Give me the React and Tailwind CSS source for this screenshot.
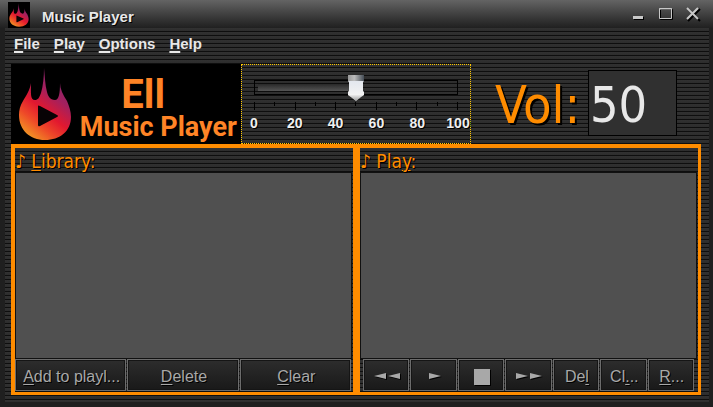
import React, { useState } from "react";

const stripes =
  "bg-[#303030] bg-[repeating-linear-gradient(180deg,#313131_0px,#2d2d2d_3px,#0e0e0e_3px,#0e0e0e_4px)]";
const tahoma = "font-['DejaVu_Sans_Condensed','Noto_Sans',sans-serif]";
const glow = "[text-shadow:1px_1px_0_#000]";

function Flame({ className, id }) {
  return (
    <svg viewBox="0 0 54 74" className={className} preserveAspectRatio="none" aria-hidden="true">
      <defs>
        <linearGradient id={id} x1="0.75" y1="0.05" x2="0.2" y2="1">
          <stop offset="0" stopColor="#80266f" />
          <stop offset="0.3" stopColor="#a3205e" />
          <stop offset="0.55" stopColor="#e2182f" />
          <stop offset="0.75" stopColor="#ee4a28" />
          <stop offset="1" stopColor="#f2a024" />
        </linearGradient>
      </defs>
      <path
        fill={`url(#${id})`}
        d="M26 1C26 10 25 19 23 26C21 31 20 33 17 33C12 33 13 26 13 16C12 23 8 29 5 34C2 39 1 43 1 48C1 63 12 73 27 73C42 73 53 64 53 50C53 44 51 39 49 34C45 28 42 22 42 16C42 26 41 33 37 33C32 33 30 29 29 25C27 18 27 10 26 1Z"
      />
      <path fill="#080305" d="M20 39Q20 38 22 39L39 48Q41 49 39 50L22 59Q20 60 20 58Z" />
    </svg>
  );
}

function Key({ children }) {
  return <span className="underline decoration-1 underline-offset-2">{children}</span>;
}

function Triangles({ count, back }) {
  const arrow = back ? "M12 0V6L0 3Z" : "M0 0V6L12 3Z";
  return (
    <svg
      width={count === 2 ? 26 : 12}
      height="8"
      className="mx-auto overflow-visible drop-shadow-[1px_1px_0_#000]"
      aria-hidden="true"
    >
      <path d={arrow} fill="#a8a8a8" />
      {count === 2 && <path d={arrow} transform="translate(14 0)" fill="#a8a8a8" />}
    </svg>
  );
}

function PushButton({ label, children }) {
  return (
    <button
      type="button"
      aria-label={label}
      className={`h-8 min-w-0 flex-1 whitespace-nowrap border border-[#6c6c6c] bg-linear-to-b from-[#2d2d2d] to-[#191919] pl-0.5 pt-1 text-center text-base leading-5 text-[#a8a8a8] outline-1 -outline-offset-2 outline-[#151515] ${glow}`}
    >
      {children}
    </button>
  );
}

function Volume({ value, onChange }) {
  return (
    <div className="h-20 w-[230px] shrink-0 border border-dotted border-[#ffc800] pt-[10px]">
      <div className="relative mx-[5px] h-[27px] pt-[5px]">
        <div className="mx-[7px] h-[15px] border border-black p-[3px]">
          <div
            className="h-full bg-linear-to-b from-[#292929] to-[#555]"
            style={{ width: `${value}%` }}
          />
        </div>
        <input
          type="range"
          min="0"
          max="100"
          value={value}
          onChange={(e) => onChange(e.target.value)}
          aria-label="Volume"
          className="absolute inset-0 h-[26px] w-full appearance-none bg-transparent [&::-webkit-slider-thumb]:h-[26px] [&::-webkit-slider-thumb]:w-4 [&::-webkit-slider-thumb]:appearance-none [&::-webkit-slider-thumb]:bg-[linear-gradient(180deg,transparent_6px,#e3e7ee_6px,#f2f2f2_75%,#999_100%),linear-gradient(90deg,#999,#bbb_40%,#444c55)] [&::-webkit-slider-thumb]:[clip-path:polygon(0_0,100%_0,100%_6px,15px_7px,15px_16px,100%_17px,100%_20px,13px_22px,8px_26px,3px_22px,0_20px,0_17px,1px_16px,1px_7px,0_6px)]"
        />
      </div>
      <div className="mx-3 flex h-2 justify-between">
        {[0, 10, 20, 30, 40, 50, 60, 70, 80, 90, 100].map((t) => (
          <span key={t} className={t % 20 ? "h-1 w-px bg-black" : "h-2 w-px bg-black"} />
        ))}
      </div>
      <div className={`mx-3 mt-[3px] flex justify-between text-sm font-bold leading-5 text-[#f0f0f0] ${glow}`}>
        {[0, 20, 40, 60, 80, 100].map((t) => (
          <span key={t} className="flex w-0 justify-center">
            {t}
          </span>
        ))}
      </div>
    </div>
  );
}

function Panel({ title, className, footer, children }) {
  return (
    <section className={`min-w-0 flex-1 border-t-4 border-b-3 border-[#ff8c00] pb-px ${className}`}>
      <h2 className={`h-6 whitespace-nowrap text-[19px] leading-[26px] text-[#ff8c00] ${tahoma} ${glow}`}>
        {title}
      </h2>
      <div className="mr-px h-[187px] border border-[#111] bg-[#505050]" />
      <div className={`flex gap-px ${footer}`}>{children}</div>
    </section>
  );
}

export default function App() {
  const [volume, setVolume] = useState(50);
  return (
    <div className="min-h-screen bg-[#1f1f1f] pb-[5px] font-['Liberation_Sans',Arial,sans-serif]">
      <header className="flex h-7 items-start bg-linear-to-b from-[#646464] to-[#202020] pl-2 pr-3">
        <span className="mt-0.5 flex h-[26px] w-[22px] items-center justify-center bg-black">
          <Flame id="small" className="h-6 w-5" />
        </span>
        <h1 className={`ml-3 mt-[7px] text-[15px] font-bold leading-5 text-[#e8e8e8] ${glow}`}>
          Music Player
        </h1>
        <div className="ml-auto mt-[7px] flex gap-3">
          <button type="button" aria-label="Minimize" className="h-4 w-4">
            <svg width="16" height="16">
              <path d="M5 10H15V13H5Z" fill="#000" />
              <path d="M4 9H14V12H4Z" fill="#c8c8c8" />
            </svg>
          </button>
          <button type="button" aria-label="Maximize" className="h-4 w-4">
            <svg width="16" height="16" fill="none">
              <path d="M3.5 2.5H15.5V12.5H3.5Z" stroke="#000" />
              <path d="M2.5 1.5H14.5V11.5H2.5ZM2 2H15" stroke="#c8c8c8" />
            </svg>
          </button>
          <button type="button" aria-label="Close" className="h-4 w-4">
            <svg width="16" height="16" fill="none" strokeWidth="2">
              <path d="M3 2L15 14M15 2L3 14" stroke="#000" />
              <path d="M2 1L13 12M13 1L2 12" stroke="#c8c8c8" />
            </svg>
          </button>
        </div>
      </header>

      <div className={`ml-[5px] mr-1 pb-[7px] pl-1.5 pr-2 ${stripes}`}>
        <nav className={`flex h-9 gap-3.5 pl-[3px] pt-1.5 text-[15px] font-bold leading-5 text-[#e8e8e8] ${glow}`}>
          {["File", "Play", "Options", "Help"].map((name) => (
            <button key={name} type="button" className="h-5">
              <span className="underline decoration-2 underline-offset-2">{name[0]}</span>
              {name.slice(1)}
            </button>
          ))}
        </nav>

        <div className="flex h-20">
          <div className="flex h-20 w-[230px] shrink-0 bg-black pl-[7px] pr-1 pt-[3px]">
            <Flame id="large" className="h-[74px] w-[54px]" />
            <div className="flex-1 pt-2 text-right font-['Roboto',sans-serif] font-bold text-[#ff8426]">
              <div className="pr-[72px] text-[40px] leading-10">Ell</div>
              <div className="whitespace-nowrap text-[27px] leading-6">Music Player</div>
            </div>
          </div>
          <Volume value={volume} onChange={setVolume} />
          <div className={`flex pl-6 pt-1.5 text-[50px] ${tahoma}`}>
            <label htmlFor="vol" className="w-[93px] text-[52px] leading-[70px] text-[#ff8c00] [text-shadow:2px_2px_0_#000]">
              Vol:
            </label>
            <input
              id="vol"
              type="text"
              value={volume}
              onChange={(e) => setVolume(e.target.value)}
              className="h-[66px] w-[89px] border border-black bg-[#303030] pl-px pt-1 text-[#e8e8e8]"
            />
          </div>
        </div>

        <main className="flex">
          <Panel title={<>♪ <Key>L</Key>ibrary:</>} className="border-x-4" footer="pr-0.5">
            <PushButton><Key>A</Key>dd to playl...</PushButton>
            <PushButton><Key>D</Key>elete</PushButton>
            <PushButton><Key>C</Key>lear</PushButton>
          </Panel>
          <Panel title={<>♪ Pla<Key>y</Key>:</>} className="border-x-3" footer="pl-[3px] pr-1">
            <PushButton label="Previous"><Triangles count={2} back /></PushButton>
            <PushButton label="Play"><Triangles count={1} /></PushButton>
            <PushButton label="Stop">
              <svg width="16" height="16" className="mx-auto overflow-visible drop-shadow-[1px_1px_0_#000]" aria-hidden="true">
                <path d="M0 0H16V16H0Z" fill="#a8a8a8" />
              </svg>
            </PushButton>
            <PushButton label="Next"><Triangles count={2} /></PushButton>
            <PushButton>De<Key>l</Key></PushButton>
            <PushButton>Cl<Key>.</Key>..</PushButton>
            <PushButton><Key>R</Key>...</PushButton>
          </Panel>
        </main>
      </div>
    </div>
  );
}
